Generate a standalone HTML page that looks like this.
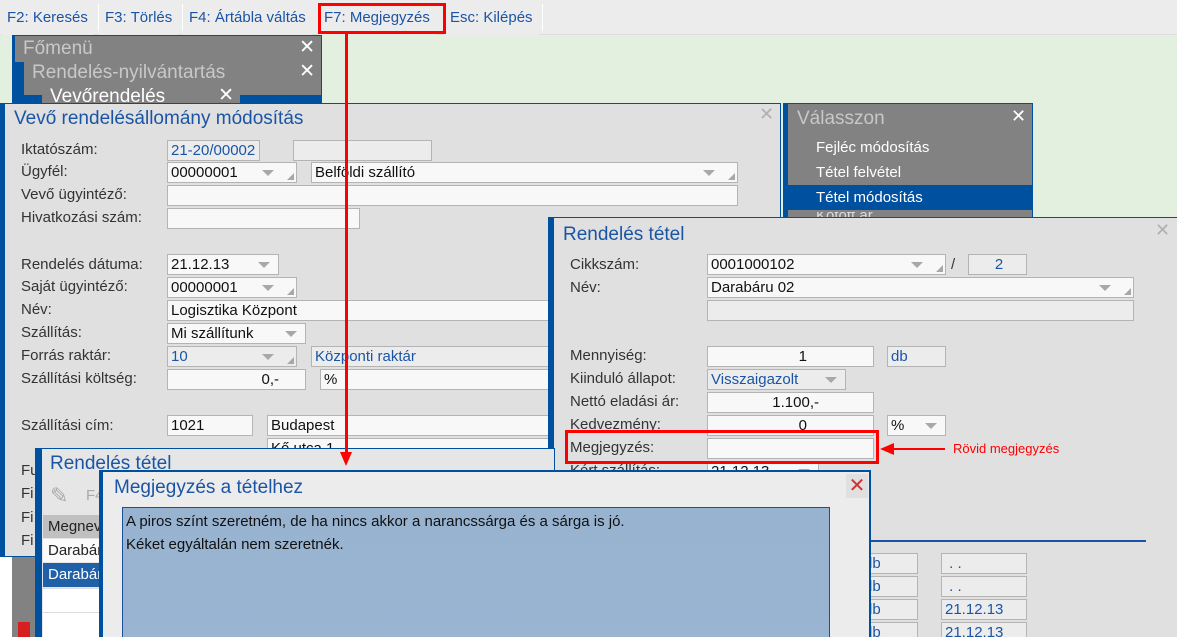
<!DOCTYPE html>
<html><head><meta charset="utf-8"><style>
*{margin:0;padding:0;box-sizing:border-box}
html,body{width:1177px;height:637px;overflow:hidden}
body{background:#e4f0df;font-family:"Liberation Sans",sans-serif;font-size:15px;color:#222;position:relative}
.a{position:absolute}
.lbl{position:absolute;color:#333;line-height:18px;white-space:nowrap}
.in{position:absolute;height:21px;background:#f8f8f8;border:1px solid #b4b4b4;line-height:19px;padding-left:3px;white-space:nowrap;overflow:hidden;color:#111}
.ro{background:#ececec;color:#1a55a5}
.dd::after{content:"";position:absolute;right:8px;top:7px;border-left:6px solid transparent;border-right:6px solid transparent;border-top:6px solid #a8a8a8}
.rs::before{content:"";position:absolute;right:2px;bottom:2px;border-left:7px solid transparent;border-bottom:7px solid #a8a8a8}
.dd.rs::after{right:22px}
.tb{position:absolute;top:0;height:35px;line-height:35px;color:#1a55a5;font-size:15px;padding:0 6px;background:#ececec}
.ttl{position:absolute;color:#1a55a5;font-size:19px;white-space:nowrap}
</style></head><body>
<div class="a" style="left:0;top:0;width:1177px;height:35px;background:#ececec;border-bottom:1px solid #ddd"></div>
<div class="tb" style="left:1px">F2: Keresés</div>
<div class="tb" style="left:99px">F3: Törlés</div>
<div class="tb" style="left:183px">F4: Ártábla váltás</div>
<div class="tb" style="left:318px">F7: Megjegyzés</div>
<div class="tb" style="left:444px">Esc: Kilépés</div>
<div class="a" style="left:98px;top:4px;width:1px;height:27px;background:#fff"></div>
<div class="a" style="left:182px;top:4px;width:1px;height:27px;background:#fff"></div>
<div class="a" style="left:542px;top:4px;width:1px;height:27px;background:#fff"></div>

<div class="a" style="left:12px;top:35px;width:310px;height:80px;background:#0050a0"></div>
<div class="a" style="left:15px;top:36px;width:306px;height:26px;background:#828282;color:#c8c8c8;font-size:19px;padding:2px 0 0 8px">Főmenü<span class="a" style="right:6px;top:0;color:#fff">✕</span></div>
<div class="a" style="left:24px;top:62px;width:297px;height:33px;background:#828282;color:#c8c8c8;font-size:19px;padding:0 0 0 8px">Rendelés-nyilvántartás<span class="a" style="right:6px;top:-2px;color:#fff">✕</span></div>
<div class="a" style="left:42px;top:86px;width:198px;height:20px;background:#828282;color:#fff;font-size:19px;padding:0 0 0 8px;overflow:hidden">Vevőrendelés<span class="a" style="right:6px;top:-2px;color:#fff">✕</span></div>
<div class="a" style="left:12px;top:115px;width:23px;height:522px;background:#828282"></div>
<div class="a" style="left:0;top:557px;width:12px;height:80px;background:#fff"></div>

<div class="a" style="left:0;top:103px;width:781px;height:454px;background:#0050a0"></div>
<div class="a" style="left:5px;top:104px;width:775px;height:452px;background:#e0e0e0"></div>
<div class="ttl" style="left:14px;top:108px">Vevő rendelésállomány módosítás</div>
<div class="a" style="left:759px;top:104px;color:#b0b0b0;font-size:18px">✕</div>
<div class="lbl" style="left:21px;top:141px">Iktatószám:</div>
<div class="in ro" style="left:167px;top:140px;width:93px">21-20/00002</div>
<div class="in ro" style="left:293px;top:140px;width:139px"></div>
<div class="lbl" style="left:21px;top:163px">Ügyfél:</div>
<div class="in dd rs" style="left:167px;top:162px;width:130px">00000001</div>
<div class="in dd rs" style="left:311px;top:162px;width:427px">Belföldi szállító</div>
<div class="lbl" style="left:21px;top:186px">Vevő ügyintéző:</div>
<div class="in" style="left:167px;top:185px;width:571px"></div>
<div class="lbl" style="left:21px;top:209px">Hivatkozási szám:</div>
<div class="in" style="left:167px;top:208px;width:193px"></div>
<div class="lbl" style="left:21px;top:256px">Rendelés dátuma:</div>
<div class="in dd" style="left:167px;top:254px;width:112px">21.12.13</div>
<div class="lbl" style="left:21px;top:278px">Saját ügyintéző:</div>
<div class="in dd rs" style="left:167px;top:277px;width:130px">00000001</div>
<div class="lbl" style="left:21px;top:301px">Név:</div>
<div class="in" style="left:167px;top:300px;width:390px">Logisztika Központ</div>
<div class="lbl" style="left:21px;top:324px">Szállítás:</div>
<div class="in dd" style="left:167px;top:323px;width:139px">Mi szállítunk</div>
<div class="lbl" style="left:21px;top:347px">Forrás raktár:</div>
<div class="in ro dd rs" style="left:167px;top:346px;width:130px">10</div>
<div class="in ro" style="left:311px;top:346px;width:246px">Központi raktár</div>
<div class="lbl" style="left:21px;top:370px">Szállítási költség:</div>
<div class="in" style="left:167px;top:369px;width:139px;text-align:right;padding-right:26px">0,-</div>
<div class="in" style="left:320px;top:369px;width:237px">%</div>
<div class="lbl" style="left:21px;top:417px">Szállítási cím:</div>
<div class="in" style="left:167px;top:415px;width:86px">1021</div>
<div class="in" style="left:267px;top:415px;width:290px">Budapest</div>
<div class="in" style="left:267px;top:438px;width:290px">Kő utca 1</div>
<div class="lbl" style="left:21px;top:462px">Fu</div>
<div class="lbl" style="left:21px;top:485px">Fi</div>
<div class="lbl" style="left:21px;top:509px">Fi</div>
<div class="lbl" style="left:21px;top:532px">Fi</div>

<div class="a" style="left:783px;top:103px;width:250px;height:115px;background:#0050a0"></div>
<div class="a" style="left:788px;top:104px;width:244px;height:114px;background:#828282"></div>
<div class="a" style="left:797px;top:108px;color:#c8c8c8;font-size:19px">Válasszon</div>
<div class="a" style="left:1011px;top:106px;color:#fff;font-size:18px">✕</div>
<div class="a" style="left:816px;top:139px;color:#fff">Fejléc módosítás</div>
<div class="a" style="left:816px;top:164px;color:#fff">Tétel felvétel</div>
<div class="a" style="left:788px;top:185px;width:244px;height:25px;background:#0050a0"></div>
<div class="a" style="left:816px;top:189px;color:#fff">Tétel módosítás</div>
<div class="a" style="left:816px;top:212px;color:#ddd;height:6px;overflow:hidden;line-height:8px">Kötött ár</div>

<div class="a" style="left:548px;top:217px;width:629px;height:420px;background:#0050a0"></div>
<div class="a" style="left:554px;top:218px;width:623px;height:419px;background:#e0e0e0"></div>
<div class="ttl" style="left:563px;top:224px">Rendelés tétel</div>
<div class="a" style="left:1155px;top:220px;color:#b0b0b0;font-size:18px">✕</div>
<div class="lbl" style="left:570px;top:256px">Cikkszám:</div>
<div class="in dd rs" style="left:707px;top:254px;width:239px">0001000102</div>
<div class="lbl" style="left:951px;top:256px">/</div>
<div class="in ro" style="left:968px;top:254px;width:59px;text-align:center">2</div>
<div class="lbl" style="left:570px;top:279px">Név:</div>
<div class="in dd rs" style="left:707px;top:277px;width:427px">Darabáru 02</div>
<div class="in ro" style="left:707px;top:300px;width:427px"></div>
<div class="lbl" style="left:570px;top:347px">Mennyiség:</div>
<div class="in" style="left:707px;top:346px;width:167px;text-align:right;padding-right:66px">1</div>
<div class="in ro" style="left:887px;top:346px;width:59px">db</div>
<div class="lbl" style="left:570px;top:370px">Kiinduló állapot:</div>
<div class="in ro dd" style="left:707px;top:369px;width:139px">Visszaigazolt</div>
<div class="lbl" style="left:570px;top:393px">Nettó eladási ár:</div>
<div class="in" style="left:707px;top:392px;width:167px;text-align:right;padding-right:54px">1.100,-</div>
<div class="lbl" style="left:570px;top:416px">Kedvezmény:</div>
<div class="in" style="left:707px;top:415px;width:167px;text-align:right;padding-right:66px">0</div>
<div class="in dd" style="left:887px;top:415px;width:59px">%</div>
<div class="lbl" style="left:570px;top:439px">Megjegyzés:</div>
<div class="in" style="left:707px;top:438px;width:167px"></div>
<div class="lbl" style="left:570px;top:462px">Kért szállítás:</div>
<div class="in dd" style="left:707px;top:461px;width:112px">21.12.13</div>
<div class="a" style="left:565px;top:430px;width:314px;height:34px;border:3px solid #f00"></div>
<div class="a" style="left:893px;top:448px;width:52px;height:2px;background:#f00"></div>
<div class="a" style="left:880px;top:443px;border-top:6px solid transparent;border-bottom:6px solid transparent;border-right:14px solid #f00"></div>
<div class="a" style="left:953px;top:441px;color:#f00;font-size:13px">Rövid megjegyzés</div>
<div class="a" style="left:860px;top:540px;width:286px;height:2px;background:#1a55a5"></div>
<div class="in ro" style="left:850px;top:553px;width:68px;padding-left:13px">db</div>
<div class="in ro" style="left:941px;top:553px;width:86px">&nbsp;. .</div>
<div class="in ro" style="left:850px;top:576px;width:68px;padding-left:13px">db</div>
<div class="in ro" style="left:941px;top:576px;width:86px">&nbsp;. .</div>
<div class="in ro" style="left:850px;top:599px;width:68px;padding-left:13px">db</div>
<div class="in ro" style="left:941px;top:599px;width:86px">21.12.13</div>
<div class="in ro" style="left:850px;top:622px;width:68px;padding-left:13px">db</div>
<div class="in ro" style="left:941px;top:622px;width:86px">21.12.13</div>

<div class="a" style="left:35px;top:448px;width:520px;height:200px;background:#0050a0"></div>
<div class="a" style="left:42px;top:449px;width:512px;height:200px;background:#e6e6e6"></div>
<div class="ttl" style="left:50px;top:453px">Rendelés tétel</div>
<div class="a" style="left:50px;top:483px;color:#aaa;font-size:22px">✎</div>
<div class="a" style="left:86px;top:487px;color:#aaa">F4</div>
<div class="a" style="left:43px;top:515px;width:60px;height:23px;background:#c0c0c0;line-height:23px;padding-left:5px">Megnev</div>
<div class="a" style="left:43px;top:539px;width:60px;height:23px;background:#fafafa;line-height:23px;padding-left:5px">Darabáru</div>
<div class="a" style="left:43px;top:563px;width:60px;height:24px;background:#2060a8;color:#fff;line-height:24px;padding-left:5px">Darabáru</div>
<div class="a" style="left:43px;top:588px;width:60px;height:60px;background:#fff;border-top:1px solid #ddd"></div>
<div class="a" style="left:43px;top:612px;width:60px;height:1px;background:#ddd"></div>
<div class="a" style="left:18px;top:622px;width:12px;height:15px;background:#d42020"></div>

<div class="a" style="left:99px;top:470px;width:772px;height:180px;background:#0050a0"></div>
<div class="a" style="left:103px;top:472px;width:766px;height:180px;background:#ececec"></div>
<div class="ttl" style="left:114px;top:477px">Megjegyzés a tételhez</div>
<div class="a" style="left:846px;top:474px;width:22px;height:24px;background:#e0e0e0;color:#d03030;font-size:20px;text-align:center;line-height:24px">✕</div>
<div class="a" style="left:122px;top:507px;width:708px;height:150px;border:1px solid #1a4f9a;background:linear-gradient(#97b3d0,#9ab5d2);padding:2px 0 0 3px;line-height:23px;color:#111">A piros színt szeretném, de ha nincs akkor a narancssárga és a sárga is jó.<br>Kéket egyáltalán nem szeretnék.</div>

<div class="a" style="left:318px;top:3px;width:128px;height:31px;border:3px solid #f00"></div>
<div class="a" style="left:345px;top:34px;width:3px;height:420px;background:#f00"></div>
<div class="a" style="left:340px;top:452px;border-left:6px solid transparent;border-right:6px solid transparent;border-top:14px solid #f00"></div>
</body></html>
